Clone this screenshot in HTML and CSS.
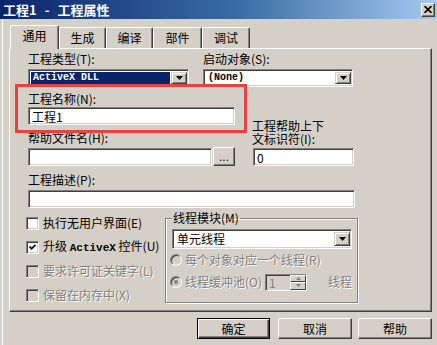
FILE: index.html
```html
<!DOCTYPE html>
<html lang="zh-CN">
<head>
    <meta charset="UTF-8">
    <meta name="viewport" content="width=device-width, initial-scale=1.0">
    <title>工程1 - 工程属性</title>
    <link rel="stylesheet" href="styles.css">
</head>
<body>
    <div class="window">
        <div class="titlebar">
            <span class="title-text">工程1<span class="title-sep">-</span>工程属性</span>
            <span class="title-close">
                <svg width="8" height="7" viewBox="0 0 8 7"><path d="M0.5 0 L7.5 7 M7.5 0 L0.5 7" stroke="#000" stroke-width="1.6"/></svg>
            </span>
        </div>

        <div class="dialog-body">
            <div class="tabs">
                <div class="tab active" style="width: 49px">通用</div>
                <div class="tab" style="width: 47px">生成</div>
                <div class="tab" style="width: 47px">编译</div>
                <div class="tab" style="width: 49px">部件</div>
                <div class="tab" style="width: 48px">调试</div>
            </div>

            <div class="panel">
                <div class="row-top">
                    <div class="col-type">
                        <span class="label">工程类型(T):</span>
                        <div class="combo">
                            <span class="combo-text selected">ActiveX DLL</span>
                            <span class="combo-btn"><svg width="7" height="4" viewBox="0 0 7 4"><path d="M0 0 H7 L3.5 4 Z" fill="#000"/></svg></span>
                        </div>
                    </div>
                    <div class="col-start">
                        <span class="label">启动对象(S):</span>
                        <div class="combo">
                            <span class="combo-text">(None)</span>
                            <span class="combo-btn"><svg width="7" height="4" viewBox="0 0 7 4"><path d="M0 0 H7 L3.5 4 Z" fill="#000"/></svg></span>
                        </div>
                    </div>
                </div>

                <div class="help-grid">
                    <span class="label name-label">工程名称(N):</span>
                    <div class="field name-field">工程1</div>
                    <span class="label help-label">帮助文件名(H):</span>
                    <span class="ctx-label"><span class="ctx-line">工程帮助上下</span><span class="ctx-line">文标识符(I):</span></span>
                    <div class="help-row">
                        <div class="field help-field"></div>
                        <span class="btn dots">...</span>
                    </div>
                    <div class="field ctx-field">0</div>
                </div>

                <span class="label desc-label">工程描述(P):</span>
                <div class="field desc-field"></div>

                <div class="bottom">
                    <div class="checks">
                        <div class="check-row">
                            <span class="checkbox"></span>
                            <span>执行无用户界面(E)</span>
                        </div>
                        <div class="check-row">
                            <span class="checkbox"><svg width="7" height="7" viewBox="0 0 7 7"><path d="M0.5 2.5 L2.5 4.8 L6.5 0.8" stroke="#000" stroke-width="1.8" fill="none"/></svg></span>
                            <span>升级 <span class="mono">ActiveX</span> 控件(U)</span>
                        </div>
                        <div class="check-row disabled">
                            <span class="checkbox"></span>
                            <span>要求许可证关键字(L)</span>
                        </div>
                        <div class="check-row disabled">
                            <span class="checkbox"></span>
                            <span>保留在内存中(X)</span>
                        </div>
                    </div>

                    <fieldset class="group">
                        <legend>线程模块(M)</legend>
                        <div class="combo thread-combo">
                            <span class="combo-text">单元线程</span>
                            <span class="combo-btn"><svg width="7" height="4" viewBox="0 0 7 4"><path d="M0 0 H7 L3.5 4 Z" fill="#000"/></svg></span>
                        </div>
                        <div class="radio-row disabled">
                            <span class="radio"></span>
                            <span>每个对象对应一个线程(R)</span>
                        </div>
                        <div class="radio-row disabled">
                            <span class="radio checked"></span>
                            <span class="pool-label">线程缓冲池(O)</span>
                            <div class="spin">
                                <span class="spin-text">1</span>
                                <span class="spin-btns">
                                    <span class="spin-btn"><svg width="5" height="3" viewBox="0 0 5 3"><path d="M0 3 H5 L2.5 0 Z" fill="#808080"/></svg></span>
                                    <span class="spin-btn"><svg width="5" height="3" viewBox="0 0 5 3"><path d="M0 0 H5 L2.5 3 Z" fill="#808080"/></svg></span>
                                </span>
                            </div>
                            <span class="pool-unit">线程</span>
                        </div>
                    </fieldset>
                </div>
            </div>

            <div class="buttons">
                <span class="btn default ok">确定</span>
                <span class="btn cancel">取消</span>
                <span class="btn">帮助</span>
            </div>
        </div>

        <div class="highlight-box"></div>
    </div>
</body>
</html>
```

FILE: styles.css
```css
body {
    margin: 0;
    padding: 0;
    background: #d4d0c8;
    font-family: "Noto Sans CJK SC", sans-serif;
    font-size: 12px;
    line-height: 14px;
    color: #000;
}

.window {
    position: relative;
    width: 437px;
    height: 345px;
    overflow: hidden;
}

.titlebar {
    height: 19px;
    display: flex;
    align-items: center;
    justify-content: space-between;
    padding: 0 2px 0 3px;
    background: linear-gradient(to right, #0a246a 0%, #3a6ea5 55%, #a6caf0 100%);
    color: white;
    font-size: 13px;
    font-weight: bold;
}

.title-sep {
    padding: 0 8px;
}

.title-close {
    width: 14px;
    height: 14px;
    box-sizing: border-box;
    display: flex;
    align-items: center;
    justify-content: center;
    background: #d4d0c8;
    border: 1px solid;
    border-color: #fff #404040 #404040 #fff;
    box-shadow: inset -1px -1px #808080;
}

.dialog-body {
    margin-left: 2px;
    border-left: 1px solid #fff;
    height: 326px;
}

.tabs {
    display: flex;
    align-items: flex-end;
    height: 29px;
    padding-left: 7px;
}

.tab {
    height: 21px;
    box-sizing: border-box;
    border: 1px solid;
    border-color: #fff #404040 transparent #fff;
    border-bottom: none;
    border-radius: 2px 2px 0 0;
    box-shadow: inset -1px 0 #808080;
    text-align: center;
    line-height: 20px;
}

.tab.active {
    height: 24px;
    margin-bottom: -1px;
    position: relative;
    z-index: 1;
    background: #d4d0c8;
}

.panel {
    margin-left: 6px;
    width: 423px;
    height: 264px;
    box-sizing: border-box;
    border: 1px solid;
    border-color: #fff #404040 #404040 #fff;
    box-shadow: inset -1px -1px #808080;
    padding-left: 18px;
}

.label {
    display: block;
    height: 14px;
    white-space: nowrap;
}

.row-top {
    display: flex;
    gap: 14px;
    padding-top: 3px;
}

.row-top .label {
    margin-bottom: 3px;
}

.col-type {
    width: 161px;
}

.col-start {
    width: 150px;
}

.field,
.combo {
    height: 18px;
    box-sizing: border-box;
    border: 1px solid;
    border-color: #808080 #fff #fff #808080;
    box-shadow: inset 1px 1px #404040, inset -1px -1px #d4d0c8;
    background: white;
    padding: 1px 2px 0 3px;
    line-height: 15px;
    white-space: nowrap;
}

.combo {
    display: flex;
    padding: 2px 1px 2px 2px;
}

.combo-text {
    flex: 1;
    padding-left: 2px;
    margin-right: 1px;
    font-family: "Liberation Mono", monospace;
    font-size: 10px;
    font-weight: bold;
    line-height: 12px;
}

.combo-text.selected {
    background: #0a246a;
    color: white;
}

.combo-btn {
    width: 16px;
    box-sizing: border-box;
    display: flex;
    align-items: center;
    justify-content: center;
    background: #d4d0c8;
    border: 1px solid;
    border-color: #d4d0c8 #404040 #404040 #d4d0c8;
    box-shadow: inset 1px 1px #fff, inset -1px -1px #808080;
}

.help-grid {
    display: grid;
    grid-template-columns: 207px 101px;
    column-gap: 18px;
    margin-top: 5px;
}

.name-label {
    grid-column: 1;
    margin-bottom: 1px;
}

.name-field {
    grid-column: 1;
}

.help-label {
    grid-column: 1;
    margin-top: 6px;
    margin-bottom: 3px;
}

.ctx-label {
    grid-column: 2;
    grid-row: 2 / 4;
    align-self: end;
    margin-left: -1px;
    margin-bottom: 3px;
    white-space: nowrap;
}

.ctx-line {
    display: block;
    height: 13px;
    line-height: 13px;
}

.help-row {
    grid-column: 1;
    display: flex;
    gap: 1px;
}

.help-field {
    width: 184px;
}

.ctx-field {
    grid-column: 2;
}

.desc-label {
    margin-top: 7px;
    margin-bottom: 3px;
}

.desc-field {
    width: 327px;
}

.btn {
    box-sizing: border-box;
    display: flex;
    align-items: center;
    justify-content: center;
    background: #d4d0c8;
    border: 1px solid;
    border-color: #fff #404040 #404040 #fff;
    box-shadow: inset -1px -1px #808080;
}

.dots {
    width: 22px;
    height: 19px;
    margin-top: -1px;
    font-family: "Liberation Sans", sans-serif;
    line-height: 10px;
}

.bottom {
    display: flex;
    margin-top: 3px;
    margin-left: -2px;
}

.checks {
    width: 139px;
}

.check-row {
    height: 24px;
    display: flex;
    align-items: center;
    gap: 4px;
    white-space: nowrap;
}

.checkbox {
    width: 13px;
    height: 13px;
    box-sizing: border-box;
    display: flex;
    align-items: center;
    justify-content: center;
    background: white;
    border: 1px solid;
    border-color: #808080 #fff #fff #808080;
    box-shadow: inset 1px 1px #404040, inset -1px -1px #d4d0c8;
}

.mono {
    font-family: "Liberation Mono", monospace;
    font-size: 11px;
    font-weight: bold;
}

.disabled {
    color: #808080;
    text-shadow: 1px 1px #fff;
}

.disabled .checkbox {
    background: #d4d0c8;
}

.group {
    margin: 0;
    width: 191px;
    height: 92px;
    box-sizing: border-box;
    padding: 0 5px 0 6px;
    border: 1px solid #808080;
    box-shadow: inset 1px 1px #fff, 1px 1px #fff;
}

.group legend {
    padding: 0 1px;
    line-height: 14px;
}

.thread-combo {
    height: 20px;
    margin-top: 4px;
}

.thread-combo .combo-text {
    font-family: "Noto Sans CJK SC", sans-serif;
    font-size: 12px;
    font-weight: normal;
    line-height: 14px;
}

.radio-row {
    height: 22px;
    display: flex;
    align-items: center;
    white-space: nowrap;
    margin-left: -2px;
}

.radio-row:first-of-type {
    margin-top: 9px;
}

.radio {
    width: 12px;
    height: 12px;
    box-sizing: border-box;
    margin-right: 3px;
    border-radius: 50%;
    border: 1px solid;
    border-color: #808080 #fff #fff #808080;
    box-shadow: inset 1px 1px #404040;
    background: #d4d0c8;
    display: flex;
    align-items: center;
    justify-content: center;
    text-shadow: none;
}

.radio.checked::after {
    content: '';
    width: 4px;
    height: 4px;
    border-radius: 50%;
    background: #808080;
}

.pool-label {
    width: 80px;
}

.spin {
    width: 42px;
    height: 17px;
    box-sizing: border-box;
    display: flex;
    border: 1px solid;
    border-color: #808080 #fff #fff #808080;
    box-shadow: inset 1px 1px #404040;
    text-shadow: none;
}

.spin-text {
    flex: 1;
    padding-left: 3px;
    line-height: 15px;
}

.spin-btns {
    width: 16px;
    display: flex;
    flex-direction: column;
}

.spin-btn {
    flex: 1;
    display: flex;
    align-items: center;
    justify-content: center;
    border: 1px solid;
    border-color: #fff #404040 #404040 #fff;
}

.pool-unit {
    margin-left: 21px;
}

.buttons {
    display: flex;
    justify-content: flex-end;
    margin-top: 6px;
    padding-right: 5px;
}

.buttons .btn {
    width: 74px;
    height: 21px;
}

.btn.default {
    width: 73px;
    border-color: #000;
    box-shadow: inset 1px 1px #fff, inset -1px -1px #404040, inset -2px -2px #808080;
}

.ok {
    margin-right: 8px;
}

.cancel {
    margin-right: 6px;
}

.highlight-box {
    position: absolute;
    left: 15px;
    top: 84px;
    width: 232px;
    height: 49px;
    box-sizing: border-box;
    border: 3px solid #e8413f;
}
```
